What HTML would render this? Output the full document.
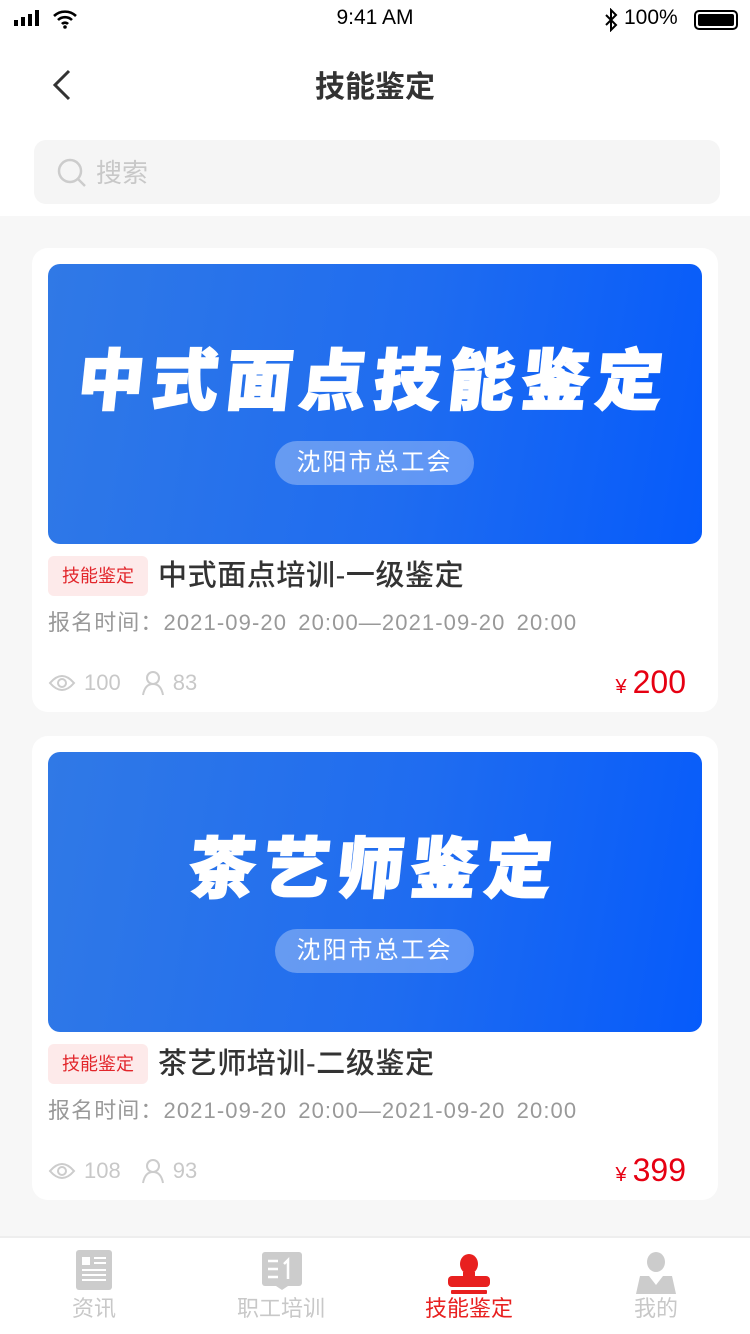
<!DOCTYPE html><html><head><meta charset="utf-8"><style>
*{margin:0;padding:0;box-sizing:border-box}
body{width:750px;height:1334px;background:#f7f7f7;font-family:"Liberation Sans","Noto Sans CJK SC",sans-serif;position:relative;overflow:hidden}
.abs{position:absolute}
.top{left:0;top:0;width:750px;height:216px;background:#fff}
.card{left:32px;width:686px;height:464px;background:#fff;border-radius:16px}
.ban{left:16px;top:16px;width:654px;height:280px;border-radius:12px;background:linear-gradient(100deg,#3079e6,#1f6cf0 55%,#065bfb);overflow:hidden}
.big{left:0;width:654px;text-align:center;color:#fff;font-weight:900;font-size:66px;letter-spacing:8px;top:72px;line-height:80px;font-family:"Noto Sans CJK SC",sans-serif;transform:skewX(-6deg);-webkit-text-stroke:2px #fff}
.pill{left:227px;top:177px;width:199px;height:44px;border-radius:22px;background:rgba(255,255,255,.3);color:#fff;font-size:24px;line-height:44px;text-align:center;letter-spacing:2px}
.tag{left:16px;top:308px;width:100px;height:40px;border-radius:6px;background:#fdeaea;color:#e2262b;font-size:18px;line-height:40px;text-align:center}
.tt{left:126px;top:308px;font-size:29px;line-height:40px;color:#333;letter-spacing:0.6px;font-weight:500}
.dt{left:16px;top:358px;font-size:22px;line-height:34px;color:#999;letter-spacing:1.1px;word-spacing:4px}
.st{left:16px;top:418px;font-size:22px;line-height:34px;color:#c8c8c8;display:flex;align-items:center}
.pr{right:32px;top:410px;color:#e60012;font-size:32px;line-height:48px}
.pr small{font-size:20px;margin-right:6px}
.tab{top:1236px;left:0;width:750px;height:98px;background:#fff;border-top:2px solid #eee}
.ti{position:absolute;top:56px;width:160px;margin-left:-80px;text-align:center;font-size:22px;line-height:30px;color:#c8c8c8}
</style></head><body>
<div class="abs top"></div>
<div class="abs" style="left:14px;top:10px;font-size:20px;display:flex;align-items:flex-end;gap:3px">
<div style="width:4px;height:6px;background:#000"></div><div style="width:4px;height:9px;background:#000"></div><div style="width:4px;height:12px;background:#000"></div><div style="width:4px;height:16px;background:#000"></div></div>
<svg class="abs" style="left:52px;top:9px" width="26" height="20" viewBox="0 0 26 20"><path d="M2 7a16 16 0 0 1 22 0M6 11a10 10 0 0 1 14 0M10 15a4 4 0 0 1 6 0" stroke="#000" stroke-width="2.6" fill="none"/><circle cx="13" cy="18" r="1.8"/></svg>
<div class="abs" style="left:0;width:750px;top:6px;text-align:center;font-size:21px;color:#000">9:41 AM</div>
<svg class="abs" style="left:604px;top:8px" width="14" height="24" viewBox="0 0 14 24"><path d="M2 7l10 10-5 5V2l5 5L2 17" stroke="#000" stroke-width="2" fill="none"/></svg>
<div class="abs" style="left:624px;top:6px;font-size:21px;color:#000">100%</div>
<div class="abs" style="left:694px;top:10px;width:44px;height:20px;border:2px solid #000;border-radius:5px;padding:2px"><div style="width:100%;height:100%;background:#000;border-radius:2px"></div></div>
<svg class="abs" style="left:50px;top:68px" width="24" height="34" viewBox="0 0 24 34"><path d="M19 3L5 17l14 14" stroke="#333" stroke-width="3" fill="none"/></svg>
<div class="abs" style="left:0;width:750px;top:68px;text-align:center;font-size:30px;line-height:40px;color:#333;font-weight:bold">技能鉴定</div>
<div class="abs" style="left:34px;top:140px;width:686px;height:64px;border-radius:12px;background:#f5f5f5"></div>
<svg class="abs" style="left:56px;top:157px" width="32" height="32" viewBox="0 0 32 32"><circle cx="14" cy="14" r="11" stroke="#ccc" stroke-width="2.5" fill="none"/><path d="M22 22l7 7" stroke="#ccc" stroke-width="2.5"/></svg>
<div class="abs" style="left:96px;top:155px;font-size:26px;line-height:36px;color:#c8c8c8">搜索</div>

<div class="abs card" style="top:248px">
<div class="abs ban"><div class="abs big">中式面点技能鉴定</div><div class="abs pill">沈阳市总工会</div></div>
<div class="abs tag">技能鉴定</div><div class="abs tt">中式面点培训-一级鉴定</div>
<div class="abs dt">报名时间：2021-09-20 20:00—2021-09-20 20:00</div>
<div class="abs st"><svg width="28" height="20" viewBox="0 0 28 20"><path d="M2 10Q14-4 26 10Q14 24 2 10z" stroke="#ccc" stroke-width="2" fill="none"/><circle cx="14" cy="10" r="4" stroke="#ccc" stroke-width="2" fill="none"/></svg><span style="margin:0 20px 0 8px">100</span><svg width="24" height="26" viewBox="0 0 24 26"><circle cx="12" cy="8" r="6" stroke="#ccc" stroke-width="2" fill="none"/><path d="M2 25Q4 14 12 14Q20 14 22 25" stroke="#ccc" stroke-width="2" fill="none"/></svg><span style="margin-left:8px">83</span></div>
<div class="abs pr"><small>¥</small>200</div>
</div>

<div class="abs card" style="top:736px">
<div class="abs ban"><div class="abs big">茶艺师鉴定</div><div class="abs pill">沈阳市总工会</div></div>
<div class="abs tag">技能鉴定</div><div class="abs tt">茶艺师培训-二级鉴定</div>
<div class="abs dt">报名时间：2021-09-20 20:00—2021-09-20 20:00</div>
<div class="abs st"><svg width="28" height="20" viewBox="0 0 28 20"><path d="M2 10Q14-4 26 10Q14 24 2 10z" stroke="#ccc" stroke-width="2" fill="none"/><circle cx="14" cy="10" r="4" stroke="#ccc" stroke-width="2" fill="none"/></svg><span style="margin:0 20px 0 8px">108</span><svg width="24" height="26" viewBox="0 0 24 26"><circle cx="12" cy="8" r="6" stroke="#ccc" stroke-width="2" fill="none"/><path d="M2 25Q4 14 12 14Q20 14 22 25" stroke="#ccc" stroke-width="2" fill="none"/></svg><span style="margin-left:8px">93</span></div>
<div class="abs pr"><small>¥</small>399</div>
</div>

<div class="abs tab">
<svg class="abs" style="left:76px;top:12px" width="36" height="40" viewBox="0 0 36 40"><rect width="36" height="40" rx="3" fill="#ccc"/><rect x="6" y="7" width="8" height="8" fill="#fff"/><path d="M18 8h12M18 13h12M6 20h24M6 25h24M6 30h24" stroke="#fff" stroke-width="2"/></svg>
<svg class="abs" style="left:262px;top:14px" width="40" height="42" viewBox="0 0 40 42"><rect width="40" height="34" rx="3" fill="#ccc"/><path d="M14 34l6 4 6-4" fill="#ccc"/><path d="M6 9h10M6 17h10M6 25h10M26 27V8l-4 4" stroke="#fff" stroke-width="2.5" fill="none"/></svg>
<svg class="abs" style="left:448px;top:16px" width="42" height="40" viewBox="0 0 42 40"><ellipse cx="21" cy="10" rx="9" ry="10" fill="#e8201f"/><path d="M15 18h12v6H15z" fill="#e8201f"/><rect x="0" y="22" width="42" height="11" rx="4" fill="#e8201f"/><rect x="3" y="36" width="36" height="4" rx="1" fill="#e8201f"/></svg>
<svg class="abs" style="left:636px;top:14px" width="40" height="42" viewBox="0 0 40 42"><ellipse cx="20" cy="10" rx="9" ry="10" fill="#ccc"/><path d="M4 24h9l7 9 7-9h9l4 18H0z" fill="#ccc"/></svg>
<div class="ti" style="left:94px">资讯</div><div class="ti" style="left:281px">职工培训</div><div class="ti" style="left:469px;color:#e8201f">技能鉴定</div><div class="ti" style="left:656px">我的</div>
</div>
</body></html>
